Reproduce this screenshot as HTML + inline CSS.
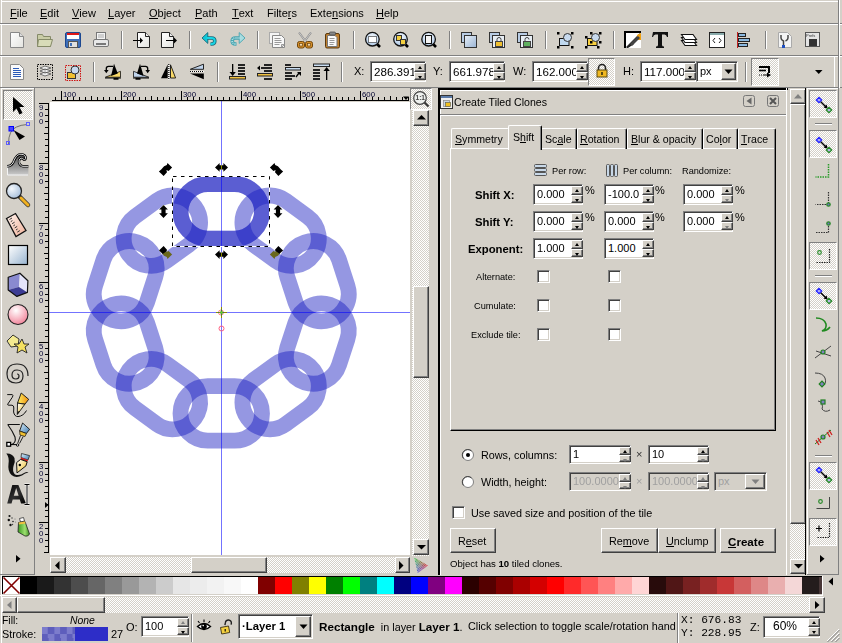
<!DOCTYPE html>
<html><head><meta charset="utf-8">
<style>
*{box-sizing:border-box}
body{margin:0;width:842px;height:643px;overflow:hidden;background:#d4d0c8;position:relative;font-family:"Liberation Sans",sans-serif;font-size:11px;color:#000}
.a{position:absolute}
.t{position:absolute;white-space:nowrap;line-height:13px}
.hl{position:absolute;height:1px}
.vl{position:absolute;width:1px}
.chk{background:repeating-conic-gradient(#fff 0 25%,#d4d0c8 0 50%) 0 0/2px 2px}
.chk2{background:repeating-conic-gradient(#c8c4bc 0 25%,#e8e6e2 0 50%) 0 0/2px 2px}
.sunk{position:absolute;border:1px solid;border-color:#808080 #fff #fff #808080}
.press{position:absolute;border:1px solid;border-color:#808080 #fff #fff #808080}
.inp{position:absolute;background:#fff;border:1px solid;border-color:#808080 #fff #fff #808080;box-shadow:inset 1px 1px 0 #404040, inset -1px -1px 0 #d4d0c8}
.inp span{position:absolute;left:3px;top:3px;white-space:nowrap;line-height:13px}
.btn{position:absolute;background:#d4d0c8;border:1px solid;border-color:#fff #404040 #404040 #fff;box-shadow:inset -1px -1px 0 #808080}
.spin{position:absolute;width:12px}
.spin i{position:absolute;left:0;width:12px;height:50%;background:#d4d0c8;border:1px solid;border-color:#fff #404040 #404040 #fff;box-shadow:inset -1px -1px 0 #808080}
.spin i.u{top:0}.spin i.d{bottom:0}
.spin i:after{content:"";position:absolute;left:3px;width:0;height:0;border-left:2.5px solid transparent;border-right:2.5px solid transparent}
.spin i.u:after{top:2px;border-bottom:3px solid #000}
.spin i.d:after{top:3px;border-top:3px solid #000}
.spin.dis i.u:after{border-bottom-color:#808080}.spin.dis i.d:after{border-top-color:#808080}.spin.dd i.d:after{border-top-color:#808080}.spin.du i.u:after{border-bottom-color:#808080}
.sep{position:absolute;width:2px;border-left:1px solid #808080;border-right:1px solid #fff}
.cb{position:absolute;width:13px;height:13px;background:#fff;border:1px solid;border-color:#808080 #fff #fff #808080;box-shadow:inset 1px 1px 0 #404040, inset -1px -1px 0 #d4d0c8}
u{text-decoration:none;border-bottom:1px solid currentColor;line-height:10px;display:inline-block}
svg{position:absolute;overflow:visible}
</style></head><body>


<!-- menu -->
<!-- window frame lines -->
<div class="vl" style="left:1px;top:0;height:643px;background:#fff"></div>
<div class="hl" style="left:1px;top:1px;width:837px;background:#fff"></div>

<!-- MENU -->
<div id="menu">
<div class="t" style="left:10px;top:7px"><u>F</u>ile</div>
<div class="t" style="left:40px;top:7px"><u>E</u>dit</div>
<div class="t" style="left:72px;top:7px"><u>V</u>iew</div>
<div class="t" style="left:108px;top:7px"><u>L</u>ayer</div>
<div class="t" style="left:149px;top:7px"><u>O</u>bject</div>
<div class="t" style="left:195px;top:7px"><u>P</u>ath</div>
<div class="t" style="left:232px;top:7px"><u>T</u>ext</div>
<div class="t" style="left:267px;top:7px">Filte<u>r</u>s</div>
<div class="t" style="left:310px;top:7px">Exte<u>n</u>sions</div>
<div class="t" style="left:376px;top:7px"><u>H</u>elp</div>
</div>
<div class="hl" style="left:0;top:23px;width:842px;background:#808080"></div>
<div class="hl" style="left:0;top:24px;width:842px;background:#fff"></div>
<div class="hl" style="left:0;top:55px;width:842px;background:#808080"></div>
<div class="hl" style="left:0;top:56px;width:842px;background:#fff"></div>
<div class="hl" style="left:0;top:87px;width:842px;background:#808080"></div>


<!-- tb1 -->
<svg style="left:0;top:0" width="842" height="56" viewBox="0 0 842 56">
<defs>
<linearGradient id="pg" x1="0" y1="0" x2="1" y2="1"><stop offset="0" stop-color="#fff"/><stop offset="1" stop-color="#e4e4e0"/></linearGradient>
<linearGradient id="bl" x1="0" y1="0" x2="1" y2="1"><stop offset="0" stop-color="#e8f0f8"/><stop offset="1" stop-color="#9ab4d4"/></linearGradient>
</defs>
<!-- new -->
<path d="M10.5 32.5h9l4 4v11h-13z" fill="url(#pg)" stroke="#888" />
<path d="M19.5 32.5v4h4" fill="#ddd" stroke="#888"/>
<!-- open -->
<path d="M37.5 34.5h5l1 2h7v10h-13z" fill="#c9cca6" stroke="#858a68"/>
<path d="M38.5 39.5h14l-2 7h-13z" fill="#d8dbb8" stroke="#858a68"/>
<!-- save -->
<rect x="65.5" y="32.5" width="15" height="15" rx="1.5" fill="#3f6fb8" stroke="#1d4890"/>
<rect x="67" y="33" width="12" height="6" fill="#fff"/>
<rect x="67" y="33" width="12" height="2" fill="#e01818"/>
<rect x="68.5" y="41.5" width="9" height="6" fill="#e0e0e0" stroke="#555"/>
<rect x="70" y="43" width="2" height="3" fill="#3f6fb8"/>
<!-- print -->
<rect x="96.5" y="32.5" width="9" height="7" fill="#f4f4f4" stroke="#777"/>
<path d="M98 35h6M98 37h6" stroke="#aaa"/>
<rect x="93.5" y="39.5" width="15" height="7" rx="1.5" fill="#e8e8e8" stroke="#777"/>
<path d="M96 44h10" stroke="#555" stroke-width="1.5"/>
<!-- sep -->
<rect x="121" y="31" width="1" height="18" fill="#808080"/><rect x="122" y="31" width="1" height="18" fill="#fff"/>
<!-- import -->
<path d="M137.5 32.5h8l4 4v11h-12z" fill="url(#pg)" stroke="#222"/>
<path d="M145.5 32.5v4h4" fill="#eee" stroke="#222"/>
<path d="M133 40.5h8" stroke="#000"/><path d="M140 37.5l3 3l-3 3z" fill="#000"/>
<!-- export -->
<path d="M161.5 32.5h8l4 4v11h-12z" fill="url(#pg)" stroke="#222"/>
<path d="M169.5 32.5v4h4" fill="#eee" stroke="#222"/>
<path d="M166 40.5h8" stroke="#000"/><path d="M174 37.5l3 3l-3 3z" fill="#000"/>
<!-- sep -->
<rect x="189" y="31" width="1" height="18" fill="#808080"/><rect x="190" y="31" width="1" height="18" fill="#fff"/>
<!-- undo -->
<path d="M206.5 38H211.5Q214.8 38 214.8 41Q214.8 44 211.5 44H210.5" fill="none" stroke="#1a6a78" stroke-width="3.6"/>
<path d="M202 38L207.8 32.6V43.4Z" fill="#10c8d8" stroke="#1a6a78" stroke-width=".9" stroke-linejoin="round"/>
<path d="M206.5 38H211.5Q214.8 38 214.8 41Q214.8 44 211.5 44H210.5" fill="none" stroke="#18d4e4" stroke-width="1.8"/>
<!-- redo -->
<path d="M240.5 38H235.5Q232.2 38 232.2 41Q232.2 44 235.5 44H236.5" fill="none" stroke="#48a4b0" stroke-width="3.6"/>
<path d="M245 38L239.2 32.6V43.4Z" fill="#a8dce0" stroke="#48a4b0" stroke-width=".9" stroke-linejoin="round"/>
<path d="M240.5 38H235.5Q232.2 38 232.2 41Q232.2 44 235.5 44H236.5" fill="none" stroke="#b0e0e4" stroke-width="1.8" stroke-dasharray="1 1"/>
<!-- sep -->
<rect x="257" y="31" width="1" height="18" fill="#808080"/><rect x="258" y="31" width="1" height="18" fill="#fff"/>
<!-- duplicate -->
<rect x="269.5" y="32.5" width="10" height="11" fill="#f4f4f4" stroke="#aaa"/>
<path d="M272.5 35.5h9l3 3v9h-12z" fill="#f8f8f8" stroke="#888"/>
<path d="M281.5 47.5l3-3h-3z" fill="#ddd" stroke="#888" stroke-width=".8"/>
<path d="M274.5 38.5h6M274.5 40.5h7M274.5 42.5h7M274.5 44.5h5" stroke="#999"/>
<!-- cut -->
<path d="M299 32.5l7 9.5M311 32.5l-7 9.5" stroke="#888" stroke-width="2"/>
<path d="M299 32.5l7 9.5M311 32.5l-7 9.5" stroke="#e4e4e4" stroke-width=".7"/>
<rect x="297.5" y="41.5" width="7" height="6.5" rx="2" fill="#d89028" stroke="#70460e"/>
<rect x="305.5" y="41.5" width="7" height="6.5" rx="2" fill="#d89028" stroke="#70460e"/>
<rect x="299.5" y="43.5" width="3" height="2.5" fill="#f0d8b0" stroke="#70460e" stroke-width=".7"/>
<rect x="307.5" y="43.5" width="3" height="2.5" fill="#f0d8b0" stroke="#70460e" stroke-width=".7"/>
<!-- paste -->
<rect x="325.5" y="33.5" width="14" height="14.5" rx="1.5" fill="#c08030" stroke="#5a3a10"/>
<path d="M327.5 35.5h7.5l2 2v9h-9.5z" fill="#fafafa" stroke="#777"/>
<rect x="329.5" y="32" width="6" height="3" rx="1" fill="#888" stroke="#444" stroke-width=".7"/>
<path d="M329.5 38.5h5M329.5 40.5h5M329.5 42.5h5M329.5 44.5h4" stroke="#999"/>
<!-- sep -->
<rect x="353" y="31" width="1" height="18" fill="#808080"/><rect x="354" y="31" width="1" height="18" fill="#fff"/>
<!-- zoom sel -->
<defs><radialGradient id="zl" cx=".5" cy=".35" r=".7"><stop offset="0" stop-color="#f8fbff"/><stop offset="1" stop-color="#a8c4e4"/></radialGradient></defs>
<path d="M377 44l3 3" stroke="#000" stroke-width="2.6"/>
<circle cx="372.4" cy="39.2" r="6.8" fill="url(#zl)" stroke="#111" stroke-width="1.3"/>
<rect x="368.5" y="36.5" width="8" height="6" fill="#fff" stroke="#000" stroke-dasharray="1 1"/>
<!-- zoom drawing -->
<path d="M405 44l3 3" stroke="#000" stroke-width="2.6"/>
<circle cx="400.5" cy="39.2" r="6.8" fill="url(#zl)" stroke="#111" stroke-width="1.3"/>
<rect x="396.5" y="35.5" width="5" height="5" fill="#f4d040" stroke="#333"/>
<rect x="400.5" y="39.5" width="5" height="5" fill="#f4d040" stroke="#333"/>
<!-- zoom page -->
<path d="M433 44l3 3" stroke="#000" stroke-width="2.6"/>
<circle cx="428.6" cy="39.2" r="6.8" fill="url(#zl)" stroke="#111" stroke-width="1.3"/>
<rect x="425.5" y="35.5" width="6" height="8" fill="#f4f4f4" stroke="#111"/>
<!-- sep -->
<rect x="449" y="31" width="1" height="18" fill="#808080"/><rect x="450" y="31" width="1" height="18" fill="#fff"/>
<!-- window icons -->
<rect x="461.5" y="32.5" width="10" height="10" fill="#b8cce4" stroke="#333"/>
<rect x="464.5" y="35.5" width="12" height="12" fill="url(#bl)" stroke="#333"/>
<rect x="489.5" y="32.5" width="10" height="10" fill="#b8cce4" stroke="#333"/>
<rect x="492.5" y="35.5" width="12" height="12" fill="#e8eef4" stroke="#333"/>
<rect x="495.5" y="41.5" width="7" height="5" fill="#f0c030" stroke="#444"/><path d="M497 41.5v-2a2 2 0 0 1 4 0v2" fill="none" stroke="#444"/>
<rect x="517.5" y="32.5" width="10" height="10" fill="#b8cce4" stroke="#333"/>
<rect x="520.5" y="35.5" width="12" height="12" fill="#e8eef4" stroke="#333"/>
<rect x="523.5" y="41.5" width="7" height="5" fill="#60b060" stroke="#444"/><path d="M525 41.5v-2a2 2 0 0 1 4 0" fill="none" stroke="#444"/>
<!-- sep -->
<rect x="545" y="31" width="1" height="18" fill="#808080"/><rect x="546" y="31" width="1" height="18" fill="#fff"/>
<!-- group-ish -->
<rect x="557" y="32" width="2.5" height="2.5" fill="#000"/><rect x="571" y="32" width="2.5" height="2.5" fill="#000"/><rect x="557" y="46" width="2.5" height="2.5" fill="#000"/><rect x="571" y="46" width="2.5" height="2.5" fill="#000"/>
<rect x="559.5" y="38.5" width="9.5" height="7" fill="#c0d8ee" stroke="#111"/>
<circle cx="567.5" cy="37.5" r="4" fill="#c8daee" stroke="#333"/>
<rect x="585" y="36" width="2.5" height="2.5" fill="#000"/><rect x="590" y="32" width="2.5" height="2.5" fill="#000"/><rect x="599" y="32" width="2.5" height="2.5" fill="#000"/><rect x="599" y="41" width="2.5" height="2.5" fill="#000"/><rect x="585" y="46" width="2.5" height="2.5" fill="#000"/><rect x="597" y="46" width="2.5" height="2.5" fill="#000"/>
<rect x="587.5" y="38.5" width="9.5" height="7" fill="#f8d040" stroke="#111"/>
<rect x="590" y="41" width="2.5" height="2.5" fill="#000"/>
<circle cx="595.5" cy="37.5" r="4" fill="#c8daee" stroke="#333"/>
<!-- sep -->
<rect x="613" y="31" width="1" height="18" fill="#808080"/><rect x="614" y="31" width="1" height="18" fill="#fff"/>
<!-- fill stroke -->
<rect x="625" y="32" width="16" height="16" fill="#fff"/>
<path d="M625 48V32H641" fill="none" stroke="#000" stroke-width="2"/>
<path d="M626 47L640 33V36L629 47Z" fill="#333"/>
<path d="M626 48L632 42L634 44L628 48Z" fill="#222"/>
<path d="M637 35L641 33L641 40L638 40Z" fill="#f0a010"/>
<path d="M630 44l8-8l2 2l-8 8z" fill="#444"/>
<!-- text T -->
<path d="M653 32h15v5h-1q-.5-2.5-2.5-2.5h-2.5v10.5q0 1.5 2 1.5v1.5h-8v-1.5q2 0 2-1.5v-10.5h-2.5q-2 0-2.5 2.5h-1z" fill="#111"/>
<!-- layers -->
<path d="M681.5 40.5h11.5l3.5 5h-11.5z" fill="#fff" stroke="#111" stroke-width="1.1"/>
<path d="M681.5 37.5h11.5l3.5 5h-11.5z" fill="#fff" stroke="#111" stroke-width="1.1"/>
<path d="M681.5 34.5h11.5l3.5 5h-11.5z" fill="#fff" stroke="#111" stroke-width="1.1"/>
<!-- xml -->
<rect x="709.5" y="32.5" width="15" height="15" fill="#fff" stroke="#222"/>
<rect x="710" y="33" width="14" height="2" fill="#8aa"/>
<path d="M715 38l-2 2.5l2 2.5M719 38l2 2.5l-2 2.5" fill="none" stroke="#222"/>
<!-- align -->
<rect x="737" y="32" width="1" height="16" fill="#c02020"/>
<rect x="738.5" y="33.5" width="7" height="3" fill="#8ab8e0" stroke="#222"/>
<rect x="738.5" y="38.5" width="11" height="3" fill="#8ab8e0" stroke="#222"/>
<rect x="738.5" y="43.5" width="9" height="3" fill="#8ab8e0" stroke="#222"/>
<!-- sep -->
<rect x="765" y="31" width="1" height="18" fill="#808080"/><rect x="766" y="31" width="1" height="18" fill="#fff"/>
<!-- doc props -->
<path d="M778.5 32.5h9l4 4v11h-13z" fill="#f4f4f4" stroke="#aaa"/>
<path d="M781 35v3q0 2 2.5 3v6M788 35v3q0 2-2.5 3" fill="none" stroke="#444" stroke-width="1.5"/>
<rect x="782" y="45" width="3" height="3" fill="#2050c0"/>
<!-- prefs -->
<rect x="805.5" y="32.5" width="14" height="14" fill="#e4e4e4" stroke="#555"/>
<rect x="809" y="39" width="8" height="7" fill="#333"/>
<text x="806" y="37" font-size="4" fill="#333" font-family="Liberation Sans">Prefs</text>
</svg>
<div class="vl" style="left:838px;top:0px;height:88px;background:#808080"></div><div class="vl" style="left:839px;top:0px;height:88px;background:#fff"></div>

<!-- tb2 -->
<svg style="left:0;top:56px" width="842" height="32" viewBox="0 56 842 32">
<!-- select all doc -->
<path d="M10.5 64.5h9l4 4v11h-13z" fill="#fafafa" stroke="#888"/>
<path d="M13 68.5h6M13 70.5h8M13 72.5h8M13 74.5h8M13 76.5h8" stroke="#2a5ab8" stroke-width="1"/>
<!-- select in all layers -->
<rect x="37.5" y="64.5" width="15" height="15" fill="none" stroke="#000" stroke-dasharray="1.5 1"/>
<path d="M40 74l5-2l6 2l-6 2z M40 71l5-2l6 2l-6 2z M40 68l5-2l6 2l-6 2z" fill="#f0f0f0" stroke="#555" stroke-width=".8"/>
<!-- select same -->
<rect x="65.5" y="65.5" width="15" height="15" fill="none" stroke="#d01010" stroke-dasharray="1.5 1"/>
<rect x="67.5" y="72.5" width="8" height="6" fill="#f0c030" stroke="#333"/>
<circle cx="75" cy="70" r="4" fill="#c8daf0" stroke="#333"/>
<!-- sep -->
<rect x="93" y="62" width="1" height="20" fill="#808080"/><rect x="94" y="62" width="1" height="20" fill="#fff"/>
<!-- rotate ccw -->
<path d="M105.4 77.2L120.5 71.3V77.2Z" fill="#f8d868" stroke="#111" stroke-width=".8"/>
<path d="M114 63.8L111 76L117.8 73.5Z" fill="#000"/>
<path d="M105 77.5L121 77.5V78.5H105Z M113.5 78H118.5V79.8H113.5Z" fill="#000"/>
<path d="M113 66.3H108.5Q106.3 66.3 106.3 68.5V70.5" fill="none" stroke="#000" stroke-width="1.3"/>
<path d="M104 70L106.3 73.3L108.6 70Z" fill="#000"/>
<!-- rotate cw -->
<path d="M133.5 71.3V77.2L148.8 77.2Z" fill="#c0d4ec" stroke="#111" stroke-width=".8"/>
<path d="M140 63.8L137 73.5L143.6 76Z" fill="#000"/>
<path d="M133 77.5L149 77.5V78.5H133Z M135.5 78H140.5V79.8H135.5Z" fill="#000"/>
<path d="M141 66.3H145.5Q147.7 66.3 147.7 68.5V70.5" fill="none" stroke="#000" stroke-width="1.3"/>
<path d="M145.4 70L147.7 73.3L150 70Z" fill="#000"/>
<!-- flip h -->
<path d="M161 78.3L167.7 64.5V78.3Z" fill="#000"/>
<path d="M170.5 64.8V78H175.6Z" fill="#f8d868" stroke="#111" stroke-width=".9"/>
<path d="M168.8 64V80" stroke="#fff" stroke-width="1.2"/>
<path d="M168.8 64V80" stroke="#000" stroke-width="1.2" stroke-dasharray="1 1"/>
<!-- flip v -->
<path d="M190.3 69.3L203.5 64.2V69.3Z" fill="#c0d4ec" stroke="#111" stroke-width=".9"/>
<path d="M190 73.5H203.8V79.3Z" fill="#000"/>
<path d="M190 71.5H204" stroke="#fff" stroke-width="1.2"/>
<path d="M190 71.5H204" stroke="#000" stroke-width="1.2" stroke-dasharray="1 1"/>
<!-- sep -->
<rect x="217" y="62" width="1" height="20" fill="#808080"/><rect x="218" y="62" width="1" height="20" fill="#fff"/>
<!-- lower to bottom -->
<rect x="232" y="64" width="1.3" height="10" fill="#000"/><path d="M229.5 72l3.15 4l3.15-4z" fill="#000"/>
<rect x="238" y="64" width="7" height="2" fill="#222"/><rect x="238" y="67" width="7" height="2" fill="#222"/><rect x="238" y="70" width="7" height="2" fill="#222"/><rect x="238" y="73" width="7" height="2" fill="#222"/>
<rect x="229.5" y="76.5" width="16" height="2.5" fill="#f0c040" stroke="#222" stroke-width="1"/>
<!-- lower -->
<rect x="264" y="64" width="8" height="2" fill="#222"/><rect x="261" y="67" width="11" height="2" fill="#222"/><rect x="264" y="70" width="8" height="2" fill="#222"/><rect x="264" y="78" width="8" height="2" fill="#222"/>
<path d="M257 68l3-2.5v5z" fill="#000"/>
<rect x="257.5" y="73.5" width="15" height="2.5" fill="#f0c040" stroke="#222" stroke-width="1"/>
<!-- raise -->
<rect x="285" y="64" width="6" height="2" fill="#222"/><rect x="285.5" y="67.5" width="15" height="2.5" fill="#c8dcf0" stroke="#222" stroke-width="1"/>
<rect x="285" y="72" width="7" height="2" fill="#222"/><rect x="285" y="75" width="10" height="2" fill="#222"/><rect x="285" y="78" width="7" height="2" fill="#222"/>
<path d="M296 77l3-4" stroke="#000" stroke-width="1.3"/><path d="M297 72h4v4z" fill="#000"/>
<!-- raise to top -->
<rect x="313.5" y="64" width="16" height="2.5" fill="#c8dcf0" stroke="#222" stroke-width="1"/>
<rect x="313" y="69" width="7" height="2" fill="#222"/><rect x="313" y="72" width="7" height="2" fill="#222"/><rect x="313" y="75" width="7" height="2" fill="#222"/><rect x="313" y="78" width="7" height="2" fill="#222"/>
<rect x="326" y="70" width="1.3" height="10" fill="#000"/><path d="M323.5 71l3.15-4l3.15 4z" fill="#000"/>
<!-- sep -->
<rect x="341" y="62" width="1" height="20" fill="#808080"/><rect x="342" y="62" width="1" height="20" fill="#fff"/>
<!-- sep 745 -->
<rect x="745" y="62" width="1" height="20" fill="#808080"/><rect x="746" y="62" width="1" height="20" fill="#fff"/>
<!-- dropdown arrow -->
<path d="M815 70h7.5l-3.75 4z" fill="#000"/>
</svg>
<div class="t" style="left:354px;top:65px">X:</div>
<div class="inp" style="left:370px;top:61px;width:56px;height:21px;overflow:hidden"><span style="font-size:11.6px;top:3px">286.391</span></div>
<div class="spin" style="left:414px;top:63px;height:17px"><i class="u"></i><i class="d"></i></div>
<div class="t" style="left:433px;top:65px">Y:</div>
<div class="inp" style="left:449px;top:61px;width:56px;height:21px;overflow:hidden"><span style="font-size:11.6px;top:3px">661.978</span></div>
<div class="spin" style="left:493px;top:63px;height:17px"><i class="u"></i><i class="d"></i></div>
<div class="t" style="left:513px;top:65px">W:</div>
<div class="inp" style="left:532px;top:61px;width:56px;height:21px;overflow:hidden"><span style="font-size:11.6px;top:3px">162.000</span></div>
<div class="spin" style="left:576px;top:63px;height:17px"><i class="u"></i><i class="d"></i></div>
<div class="press chk" style="left:588px;top:58px;width:27px;height:28px"></div>
<svg style="left:596px;top:63px" width="12" height="16" viewBox="0 0 12 16">
<path d="M2.5 7.5v-2.5a3.5 3.5 0 0 1 7 0v2.5" fill="none" stroke="#222" stroke-width="1.6"/>
<rect x="1" y="7" width="10" height="7" fill="#f0b820" stroke="#5a4a10"/>
<rect x="5" y="9" width="2" height="3" fill="#5a4a10"/>
</svg>
<div class="t" style="left:623px;top:65px">H:</div>
<div class="inp" style="left:640px;top:61px;width:56px;height:21px;overflow:hidden"><span style="font-size:11.6px;top:3px">117.000</span></div>
<div class="spin" style="left:684px;top:63px;height:17px"><i class="u"></i><i class="d"></i></div>
<div class="inp" style="left:696px;top:61px;width:42px;height:21px"><span style="top:3px;left:3px">px</span></div>
<div class="btn" style="left:721px;top:63px;width:15px;height:17px"></div>
<svg style="left:724px;top:69px" width="9" height="6"><path d="M0.5 0.5h8l-4 4.5z" fill="#000"/></svg>
<div class="press chk" style="left:751px;top:58px;width:28px;height:28px"></div>
<svg style="left:756px;top:64px" width="18" height="16" viewBox="0 0 18 16">
<path d="M3 3h10v6" fill="none" stroke="#000" stroke-width="2"/>
<path d="M3 6.5h7" stroke="#000" stroke-width="1.6"/>
<path d="M3 11h1M5 11h1M7 11h5" stroke="#000" stroke-width="1"/>
<path d="M11 8.5l4 2.5l-4 2.5z" fill="#000"/>
</svg>
<div class="vl" style="left:834px;top:57px;height:30px;background:#fff"></div>

<!-- toolbox -->
<div class="hl" style="left:1px;top:88px;width:33px;background:#fff"></div>
<div class="vl" style="left:34px;top:88px;height:487px;background:#808080"></div>
<div class="hl" style="left:0;top:574px;width:35px;background:#808080"></div>
<div class="press chk" style="left:3px;top:90px;width:30px;height:30px"></div>
<svg style="left:0;top:88px" width="35" height="487" viewBox="0 88 35 487">
<defs>
<linearGradient id="tw" x1="0" y1="0" x2="0" y2="1"><stop offset="0" stop-color="#505050"/><stop offset=".5" stop-color="#8a8a8a"/><stop offset="1" stop-color="#cfcfcf"/></linearGradient>
<radialGradient id="lens" cx=".35" cy=".35" r=".7"><stop offset="0" stop-color="#f4f8fc"/><stop offset="1" stop-color="#a8c0dc"/></radialGradient>
<linearGradient id="rg" x1="0" y1="0" x2="1" y2="1"><stop offset="0" stop-color="#fff"/><stop offset="1" stop-color="#98b4d0"/></linearGradient>
<radialGradient id="eg" cx=".4" cy=".3" r=".8"><stop offset="0" stop-color="#fff"/><stop offset="1" stop-color="#f07890"/></radialGradient>
<linearGradient id="bx" x1="0" y1="0" x2="1" y2="1"><stop offset="0" stop-color="#c8c8f0"/><stop offset="1" stop-color="#5858a8"/></linearGradient>
<linearGradient id="ruler" x1="0" y1="0" x2="1" y2="1"><stop offset="0" stop-color="#fff4ee"/><stop offset="1" stop-color="#f0b098"/></linearGradient>
<linearGradient id="spr" x1="0" y1="0" x2="1" y2="0"><stop offset="0" stop-color="#3a9a20"/><stop offset=".6" stop-color="#9ee070"/><stop offset="1" stop-color="#3a8a20"/></linearGradient>
<linearGradient id="pen1" x1="0" y1="0" x2="1" y2="0"><stop offset="0" stop-color="#fff060"/><stop offset="1" stop-color="#f09010"/></linearGradient>
<linearGradient id="pen2" x1="0" y1="0" x2="1" y2="1"><stop offset="0" stop-color="#fff"/><stop offset="1" stop-color="#f0c020"/></linearGradient>
<linearGradient id="penb" x1="0" y1="0" x2="1" y2="1"><stop offset="0" stop-color="#e0f4fc"/><stop offset="1" stop-color="#3c78b0"/></linearGradient>
<linearGradient id="txa" x1="0" y1="0" x2="1" y2="1"><stop offset="0" stop-color="#000"/><stop offset=".5" stop-color="#303030"/><stop offset="1" stop-color="#000"/></linearGradient>
</defs>
<!-- select arrow -->
<path d="M13 97v15l3.5-3.5l3 6l3-1.5l-3-6h5z" fill="#000"/>
<!-- node -->
<path d="M8.5 144q0-14 8-17q4-2 10.5-2.5" fill="none" stroke="#555" stroke-width=".8"/>
<rect x="9" y="126.5" width="4.5" height="4.5" fill="#4848ff" stroke="#0000ff"/>
<rect x="6.5" y="141.5" width="3" height="3" fill="none" stroke="#6060ff"/>
<rect x="26.5" y="122.5" width="3" height="3" fill="none" stroke="#6060ff"/>
<path d="M13.5 130l6 10l5.5-3.5z" fill="#000"/>
<!-- tweak -->
<path d="M7 166.3C10 166.3 12 165 13.5 162C15 158 17 154.2 21 154.2C24.5 154.2 26 156.5 25.6 158.5C25.3 160 24 160 23.3 159C22.5 158 21 157.8 20 158.8C18.5 160.5 18.8 163.5 20.5 165.2C21.3 166 22 166.3 23 166.3L28.4 166.3L28.4 175.5L7 175.5Z" fill="url(#tw)"/>
<path d="M7.5 166.5V175H28" fill="none" stroke="#f4f4f4" stroke-width="1"/>
<path d="M7 166.3C10 166.3 12 165 13.5 162C15 158 17 154.2 21 154.2C24.5 154.2 26 156.5 25.6 158.5C25.3 160 24 160 23.3 159C22.5 158 21 157.8 20 158.8C18.5 160.5 18.8 163.5 20.5 165.2C21.3 166 22 166.3 23 166.3L28.4 166.3" fill="none" stroke="#000" stroke-width="2.6"/>
<path d="M7 166.3C10 166.3 12 165 13.5 162C15 158 17 154.2 21 154.2C24.5 154.2 26 156.5 25.6 158.5C25.3 160 24 160 23.3 159C22.5 158 21 157.8 20 158.8C18.5 160.5 18.8 163.5 20.5 165.2C21.3 166 22 166.3 23 166.3L28.4 166.3" fill="none" stroke="#fff" stroke-width=".9"/>
<!-- zoom -->
<path d="M19 196l9 9" stroke="#333" stroke-width="4.5" stroke-linecap="round"/>
<path d="M21 198l7 7" stroke="#f0b020" stroke-width="3" stroke-linecap="round"/>
<circle cx="14" cy="191" r="7.5" fill="url(#lens)" stroke="#222" stroke-width="1.3"/>
<!-- measure -->
<path d="M6.5 218.5L15.5 213.5L26 230.5L16 236.5Z" fill="url(#ruler)" stroke="#111" stroke-width="1.3"/>
<path d="M9.5 219.5l2.5-1.5M10.8 221.6l1.6-1M12.1 223.7l2.5-1.5M13.4 225.8l1.6-1M14.7 227.9l2.5-1.5M16 230l1.6-1M17.3 232.1l2.5-1.5" stroke="#222" stroke-width=".9"/>
<!-- rect -->
<rect x="8.5" y="245.5" width="19" height="19" fill="url(#rg)" stroke="#000" stroke-width="1.2"/>
<!-- 3d box -->
<path d="M8.2 277.2L19.9 273.2L18.9 286.9L8.2 290.1Z" fill="#8a8ad0"/>
<path d="M19.9 273.2L27.9 280.7L27.4 292.4L18.9 286.9Z" fill="#e4e4fa"/>
<path d="M8.2 290.1L18.9 286.9L27.4 292.4L16.9 296.4Z" fill="#3c3c94"/>
<path d="M8.2 277.2L19.9 273.2L27.9 280.7L27.4 292.4L16.9 296.4L8.2 290.1Z" fill="none" stroke="#111" stroke-width="1.2" stroke-linejoin="round"/>
<!-- ellipse -->
<circle cx="18" cy="314.5" r="10" fill="url(#eg)" stroke="#222" stroke-width="1.1"/>
<!-- star -->
<path d="M13 335l6 4l-1 7l-7 1l-4-6z" fill="#f4ea90" stroke="#222" stroke-width=".9"/>
<path d="M22 339l2 5h5l-4 3l2 6l-5-3l-5 3l1-6l-4-3h5z" fill="#f4e060" stroke="#222" stroke-width=".9"/>
<!-- spiral -->
<path d="M17 374q2 0 2 2q0 3-3 3q-4 0-4-4q0-5 5-5q6 0 6 6q0 7-7 7q-9 0-9-9q0-10 10-10q11 0 11 12" fill="none" stroke="#222" stroke-width="1.2"/>
<!-- pencil -->
<path d="M7.2 394.6H12.3Q13.6 395.3 12.3 397.3L7.6 404.3Q7.4 405.2 9 405.2H12Q14 405.4 13.8 408L13.6 412Q14.4 416.6 18 416.6Q23.5 416 26.5 410.5" fill="none" stroke="#111" stroke-width="1"/>
<path d="M21.2 393L28.7 399.3L24.9 404.2L17.5 403.1Z" fill="url(#pen1)" stroke="#111" stroke-width=".9"/>
<path d="M17.5 403.1L24.9 404.2L17.3 414.5Z" fill="url(#pen2)" stroke="#111" stroke-width=".9"/>
<path d="M17.6 411.5L19.6 411.2L17.3 414.5Z" fill="#000"/>
<!-- pen -->
<path d="M7.7 424.5H19.8M7.7 424.5Q12.5 431 15 437Q16.5 443 11 444.8" fill="none" stroke="#111" stroke-width="1.1"/>
<rect x="6.8" y="442.4" width="3.8" height="3.8" fill="#fff" stroke="#000" stroke-width="1.3"/>
<path d="M10.6 444.6H16.4" stroke="#000" stroke-width="1"/>
<circle cx="17.6" cy="445" r="1.2" fill="#fff" stroke="#000" stroke-width="1"/>
<path d="M22.6 423L29.6 429.3L26.4 433.5L19.6 431Z" fill="url(#penb)" stroke="#111" stroke-width=".9"/>
<path d="M19.6 431L26.4 433.5L25 436.5L20 435Z" fill="#f0c030" stroke="#111" stroke-width=".7"/>
<path d="M20.5 435.5L17.8 443M23.2 436.5L19.5 443.5" stroke="#111" stroke-width=".9"/>
<!-- calligraphy -->
<path d="M6.3 453.5Q12 453 14.5 458Q15.5 462 13.5 466Q12 471 15 474.5Q20 476 24 473Q27 471.5 28.5 472.5Q25 473 22 475.5Q16 478.5 11.5 475Q7.5 471 8.5 464Q9.5 457 6.3 453.5Z" fill="#111"/>
<path d="M21.5 453.5L29.6 455.6L28 460L21 457.5Z" fill="url(#penb)" stroke="#111" stroke-width=".7"/>
<path d="M21 457.5L28 460L27.2 461.8L20.6 459.4Z" fill="#d01818"/>
<path d="M16.6 462.6L20.6 459.4L27.2 461.8L25.9 465.9L17 472.9Z" fill="url(#pen2)" stroke="#111" stroke-width="1"/>
<circle cx="19.8" cy="465" r="1.2" fill="#000"/>
<!-- text -->
<path d="M7.2 503.5L12.3 485H18.4L26 503.5H21L19.8 499.5H12.7L11.5 503.5Z M13.8 495.8H18.6L16.2 488Z" fill="url(#txa)"/>
<path d="M24.5 484.5h5M27 484.5v20M24.5 504.5h5" stroke="#fff" stroke-width="2.2"/>
<path d="M24.5 484.5h5M27 484.5v20M24.5 504.5h5" stroke="#000" stroke-width="1"/>
<!-- spray -->
<circle cx="9.5" cy="516" r="1.1" fill="#111"/><circle cx="8.8" cy="520" r="1.2" fill="#111"/><circle cx="10.5" cy="525" r="1.2" fill="#111"/><circle cx="12" cy="518" r=".7" fill="#333"/><circle cx="13" cy="521.5" r=".8" fill="#222"/><circle cx="15" cy="519" r=".6" fill="#777"/><circle cx="15.5" cy="522" r=".6" fill="#888"/><circle cx="12.5" cy="524.5" r=".7" fill="#444"/>
<path d="M19.5 518.5L23.5 517.5L24.5 521L20.5 522Z" fill="#fff" stroke="#333" stroke-width=".8"/>
<path d="M18.5 522.5L25 521.5L29.5 534Q28 537 25 536L18 532Z" fill="url(#spr)" stroke="#222" stroke-width=".8"/>
<path d="M18.6 522.5L25 521.5L25.5 523.5L19 524.5Z" fill="#f0c040"/>
<!-- more arrow -->
<path d="M16 555v7.5l4.5-3.75z" fill="#000"/>
</svg>

<!-- canvas -->
<div class="a" style="left:50px;top:102px;width:360px;height:453px;background:#fff"></div>
<svg style="left:35px;top:88px" width="375" height="13" viewBox="35 88 375 13">
<rect x="52" y="100" width="357" height="1" fill="#000"/>
<rect x="55" y="97" width="1" height="3" fill="#000"/>
<rect x="61" y="91" width="1" height="9" fill="#000"/>
<text x="63" y="96.6" font-size="7.8" fill="#000030" font-family="Liberation Sans">100</text>
<rect x="67" y="97" width="1" height="3" fill="#000"/>
<rect x="73" y="97" width="1" height="3" fill="#000"/>
<rect x="79" y="97" width="1" height="3" fill="#000"/>
<rect x="85" y="97" width="1" height="3" fill="#000"/>
<rect x="91" y="96" width="1" height="4" fill="#000"/>
<rect x="97" y="97" width="1" height="3" fill="#000"/>
<rect x="103" y="97" width="1" height="3" fill="#000"/>
<rect x="109" y="97" width="1" height="3" fill="#000"/>
<rect x="115" y="97" width="1" height="3" fill="#000"/>
<rect x="121" y="91" width="1" height="9" fill="#000"/>
<text x="123" y="96.6" font-size="7.8" fill="#000030" font-family="Liberation Sans">200</text>
<rect x="127" y="97" width="1" height="3" fill="#000"/>
<rect x="133" y="97" width="1" height="3" fill="#000"/>
<rect x="139" y="97" width="1" height="3" fill="#000"/>
<rect x="145" y="97" width="1" height="3" fill="#000"/>
<rect x="151" y="96" width="1" height="4" fill="#000"/>
<rect x="157" y="97" width="1" height="3" fill="#000"/>
<rect x="163" y="97" width="1" height="3" fill="#000"/>
<rect x="169" y="97" width="1" height="3" fill="#000"/>
<rect x="175" y="97" width="1" height="3" fill="#000"/>
<rect x="181" y="91" width="1" height="9" fill="#000"/>
<text x="183" y="96.6" font-size="7.8" fill="#000030" font-family="Liberation Sans">300</text>
<rect x="187" y="97" width="1" height="3" fill="#000"/>
<rect x="193" y="97" width="1" height="3" fill="#000"/>
<rect x="199" y="97" width="1" height="3" fill="#000"/>
<rect x="205" y="97" width="1" height="3" fill="#000"/>
<rect x="211" y="96" width="1" height="4" fill="#000"/>
<rect x="217" y="97" width="1" height="3" fill="#000"/>
<rect x="223" y="97" width="1" height="3" fill="#000"/>
<rect x="229" y="97" width="1" height="3" fill="#000"/>
<rect x="235" y="97" width="1" height="3" fill="#000"/>
<rect x="241" y="91" width="1" height="9" fill="#000"/>
<text x="243" y="96.6" font-size="7.8" fill="#000030" font-family="Liberation Sans">400</text>
<rect x="247" y="97" width="1" height="3" fill="#000"/>
<rect x="253" y="97" width="1" height="3" fill="#000"/>
<rect x="259" y="97" width="1" height="3" fill="#000"/>
<rect x="265" y="97" width="1" height="3" fill="#000"/>
<rect x="271" y="96" width="1" height="4" fill="#000"/>
<rect x="276" y="97" width="1" height="3" fill="#000"/>
<rect x="282" y="97" width="1" height="3" fill="#000"/>
<rect x="288" y="97" width="1" height="3" fill="#000"/>
<rect x="294" y="97" width="1" height="3" fill="#000"/>
<rect x="300" y="91" width="1" height="9" fill="#000"/>
<text x="302" y="96.6" font-size="7.8" fill="#000030" font-family="Liberation Sans">500</text>
<rect x="306" y="97" width="1" height="3" fill="#000"/>
<rect x="312" y="97" width="1" height="3" fill="#000"/>
<rect x="318" y="97" width="1" height="3" fill="#000"/>
<rect x="324" y="97" width="1" height="3" fill="#000"/>
<rect x="330" y="96" width="1" height="4" fill="#000"/>
<rect x="336" y="97" width="1" height="3" fill="#000"/>
<rect x="342" y="97" width="1" height="3" fill="#000"/>
<rect x="348" y="97" width="1" height="3" fill="#000"/>
<rect x="354" y="97" width="1" height="3" fill="#000"/>
<rect x="360" y="91" width="1" height="9" fill="#000"/>
<text x="362" y="96.6" font-size="7.8" fill="#000030" font-family="Liberation Sans">600</text>
<rect x="366" y="97" width="1" height="3" fill="#000"/>
<rect x="372" y="97" width="1" height="3" fill="#000"/>
<rect x="378" y="97" width="1" height="3" fill="#000"/>
<rect x="384" y="97" width="1" height="3" fill="#000"/>
<rect x="390" y="96" width="1" height="4" fill="#000"/>
<rect x="396" y="97" width="1" height="3" fill="#000"/>
<rect x="402" y="97" width="1" height="3" fill="#000"/>
<rect x="408" y="97" width="1" height="3" fill="#000"/>
<path d="M403 96.5h6l-3 3.5z" fill="#000"/>
</svg>
<svg style="left:35px;top:101px" width="14" height="454" viewBox="35 101 14 454">
<rect x="48" y="103" width="1" height="450" fill="#000"/>
<rect x="39" y="103" width="9" height="1" fill="#000"/>
<text x="39" y="110.4" font-size="7.8" fill="#000030" font-family="Liberation Sans">9</text>
<text x="39" y="117.10000000000001" font-size="7.8" fill="#000030" font-family="Liberation Sans">0</text>
<text x="39" y="123.80000000000001" font-size="7.8" fill="#000030" font-family="Liberation Sans">0</text>
<rect x="45" y="109" width="3" height="1" fill="#000"/>
<rect x="45" y="115" width="3" height="1" fill="#000"/>
<rect x="45" y="121" width="3" height="1" fill="#000"/>
<rect x="45" y="127" width="3" height="1" fill="#000"/>
<rect x="44" y="133" width="4" height="1" fill="#000"/>
<rect x="45" y="139" width="3" height="1" fill="#000"/>
<rect x="45" y="145" width="3" height="1" fill="#000"/>
<rect x="45" y="151" width="3" height="1" fill="#000"/>
<rect x="45" y="157" width="3" height="1" fill="#000"/>
<rect x="39" y="163" width="9" height="1" fill="#000"/>
<text x="39" y="170.4" font-size="7.8" fill="#000030" font-family="Liberation Sans">8</text>
<text x="39" y="177.1" font-size="7.8" fill="#000030" font-family="Liberation Sans">0</text>
<text x="39" y="183.8" font-size="7.8" fill="#000030" font-family="Liberation Sans">0</text>
<rect x="45" y="169" width="3" height="1" fill="#000"/>
<rect x="45" y="175" width="3" height="1" fill="#000"/>
<rect x="45" y="181" width="3" height="1" fill="#000"/>
<rect x="45" y="187" width="3" height="1" fill="#000"/>
<rect x="44" y="193" width="4" height="1" fill="#000"/>
<rect x="45" y="199" width="3" height="1" fill="#000"/>
<rect x="45" y="205" width="3" height="1" fill="#000"/>
<rect x="45" y="211" width="3" height="1" fill="#000"/>
<rect x="45" y="217" width="3" height="1" fill="#000"/>
<rect x="39" y="223" width="9" height="1" fill="#000"/>
<text x="39" y="230.4" font-size="7.8" fill="#000030" font-family="Liberation Sans">7</text>
<text x="39" y="237.1" font-size="7.8" fill="#000030" font-family="Liberation Sans">0</text>
<text x="39" y="243.8" font-size="7.8" fill="#000030" font-family="Liberation Sans">0</text>
<rect x="45" y="229" width="3" height="1" fill="#000"/>
<rect x="45" y="235" width="3" height="1" fill="#000"/>
<rect x="45" y="241" width="3" height="1" fill="#000"/>
<rect x="45" y="247" width="3" height="1" fill="#000"/>
<rect x="44" y="253" width="4" height="1" fill="#000"/>
<rect x="45" y="258" width="3" height="1" fill="#000"/>
<rect x="45" y="264" width="3" height="1" fill="#000"/>
<rect x="45" y="270" width="3" height="1" fill="#000"/>
<rect x="45" y="276" width="3" height="1" fill="#000"/>
<rect x="39" y="282" width="9" height="1" fill="#000"/>
<text x="39" y="289.4" font-size="7.8" fill="#000030" font-family="Liberation Sans">6</text>
<text x="39" y="296.09999999999997" font-size="7.8" fill="#000030" font-family="Liberation Sans">0</text>
<text x="39" y="302.79999999999995" font-size="7.8" fill="#000030" font-family="Liberation Sans">0</text>
<rect x="45" y="288" width="3" height="1" fill="#000"/>
<rect x="45" y="294" width="3" height="1" fill="#000"/>
<rect x="45" y="300" width="3" height="1" fill="#000"/>
<rect x="45" y="306" width="3" height="1" fill="#000"/>
<rect x="44" y="312" width="4" height="1" fill="#000"/>
<rect x="45" y="318" width="3" height="1" fill="#000"/>
<rect x="45" y="324" width="3" height="1" fill="#000"/>
<rect x="45" y="330" width="3" height="1" fill="#000"/>
<rect x="45" y="336" width="3" height="1" fill="#000"/>
<rect x="39" y="342" width="9" height="1" fill="#000"/>
<text x="39" y="349.4" font-size="7.8" fill="#000030" font-family="Liberation Sans">5</text>
<text x="39" y="356.09999999999997" font-size="7.8" fill="#000030" font-family="Liberation Sans">0</text>
<text x="39" y="362.79999999999995" font-size="7.8" fill="#000030" font-family="Liberation Sans">0</text>
<rect x="45" y="348" width="3" height="1" fill="#000"/>
<rect x="45" y="354" width="3" height="1" fill="#000"/>
<rect x="45" y="360" width="3" height="1" fill="#000"/>
<rect x="45" y="366" width="3" height="1" fill="#000"/>
<rect x="44" y="372" width="4" height="1" fill="#000"/>
<rect x="45" y="378" width="3" height="1" fill="#000"/>
<rect x="45" y="384" width="3" height="1" fill="#000"/>
<rect x="45" y="390" width="3" height="1" fill="#000"/>
<rect x="45" y="396" width="3" height="1" fill="#000"/>
<rect x="39" y="402" width="9" height="1" fill="#000"/>
<text x="39" y="409.4" font-size="7.8" fill="#000030" font-family="Liberation Sans">4</text>
<text x="39" y="416.09999999999997" font-size="7.8" fill="#000030" font-family="Liberation Sans">0</text>
<text x="39" y="422.79999999999995" font-size="7.8" fill="#000030" font-family="Liberation Sans">0</text>
<rect x="45" y="408" width="3" height="1" fill="#000"/>
<rect x="45" y="414" width="3" height="1" fill="#000"/>
<rect x="45" y="420" width="3" height="1" fill="#000"/>
<rect x="45" y="426" width="3" height="1" fill="#000"/>
<rect x="44" y="432" width="4" height="1" fill="#000"/>
<rect x="45" y="438" width="3" height="1" fill="#000"/>
<rect x="45" y="444" width="3" height="1" fill="#000"/>
<rect x="45" y="450" width="3" height="1" fill="#000"/>
<rect x="45" y="456" width="3" height="1" fill="#000"/>
<rect x="39" y="462" width="9" height="1" fill="#000"/>
<text x="39" y="469.4" font-size="7.8" fill="#000030" font-family="Liberation Sans">3</text>
<text x="39" y="476.09999999999997" font-size="7.8" fill="#000030" font-family="Liberation Sans">0</text>
<text x="39" y="482.79999999999995" font-size="7.8" fill="#000030" font-family="Liberation Sans">0</text>
<rect x="45" y="468" width="3" height="1" fill="#000"/>
<rect x="45" y="474" width="3" height="1" fill="#000"/>
<rect x="45" y="480" width="3" height="1" fill="#000"/>
<rect x="45" y="486" width="3" height="1" fill="#000"/>
<rect x="44" y="492" width="4" height="1" fill="#000"/>
<rect x="45" y="498" width="3" height="1" fill="#000"/>
<rect x="45" y="504" width="3" height="1" fill="#000"/>
<rect x="45" y="510" width="3" height="1" fill="#000"/>
<rect x="45" y="516" width="3" height="1" fill="#000"/>
<rect x="39" y="522" width="9" height="1" fill="#000"/>
<text x="39" y="529.4" font-size="7.8" fill="#000030" font-family="Liberation Sans">2</text>
<text x="39" y="536.1" font-size="7.8" fill="#000030" font-family="Liberation Sans">0</text>
<text x="39" y="542.8" font-size="7.8" fill="#000030" font-family="Liberation Sans">0</text>
<rect x="45" y="528" width="3" height="1" fill="#000"/>
<rect x="45" y="534" width="3" height="1" fill="#000"/>
<rect x="45" y="540" width="3" height="1" fill="#000"/>
<rect x="45" y="546" width="3" height="1" fill="#000"/>
<rect x="44" y="552" width="4" height="1" fill="#000"/>
<path d="M45 502v6l3.5-3z" fill="#000"/>
</svg>
<svg style="left:49px;top:101px" width="361" height="454" viewBox="49 101 361 454"><g fill="none" stroke="rgb(24,28,192)" stroke-opacity=".46" stroke-width="15.8"><rect x="180.5" y="184.14999999999998" width="81.5" height="54.5" rx="27.25" transform="rotate(0 221.25 312.4)"/><rect x="180.5" y="184.14999999999998" width="81.5" height="54.5" rx="27.25" transform="rotate(0 221.25 312.4)"/><rect x="180.5" y="184.14999999999998" width="81.5" height="54.5" rx="27.25" transform="rotate(36 221.25 312.4)"/><rect x="180.5" y="184.14999999999998" width="81.5" height="54.5" rx="27.25" transform="rotate(72 221.25 312.4)"/><rect x="180.5" y="184.14999999999998" width="81.5" height="54.5" rx="27.25" transform="rotate(108 221.25 312.4)"/><rect x="180.5" y="184.14999999999998" width="81.5" height="54.5" rx="27.25" transform="rotate(144 221.25 312.4)"/><rect x="180.5" y="184.14999999999998" width="81.5" height="54.5" rx="27.25" transform="rotate(180 221.25 312.4)"/><rect x="180.5" y="184.14999999999998" width="81.5" height="54.5" rx="27.25" transform="rotate(216 221.25 312.4)"/><rect x="180.5" y="184.14999999999998" width="81.5" height="54.5" rx="27.25" transform="rotate(252 221.25 312.4)"/><rect x="180.5" y="184.14999999999998" width="81.5" height="54.5" rx="27.25" transform="rotate(288 221.25 312.4)"/><rect x="180.5" y="184.14999999999998" width="81.5" height="54.5" rx="27.25" transform="rotate(324 221.25 312.4)"/></g><rect x="221" y="101" width="1" height="454" fill="rgba(0,0,255,.55)"/><rect x="49" y="312" width="361" height="1" fill="rgba(0,0,255,.55)"/><rect x="172.5" y="176.5" width="97" height="70" fill="none" stroke="#fff" stroke-width="1"/><rect x="172.5" y="176.5" width="97" height="70" fill="none" stroke="#000" stroke-width="1" stroke-dasharray="3.5 4.5" stroke-dashoffset="-0.5"/><circle cx="221" cy="312.5" r="2.5" fill="none" stroke="#ff8080" stroke-width="1"/><g style="mix-blend-mode:difference"><path d="M216 312.5h11M221.5 307v11" stroke="#fff" stroke-width="1"/></g><rect x="220" y="311" width="3" height="3" fill="#40c040" opacity=".6"/><circle cx="221.5" cy="328.5" r="2.5" fill="none" stroke="#ff6080" stroke-width="1"/><g fill="#fff" style="mix-blend-mode:difference"><path transform="translate(165.5 169.5)" d="M2 -6.5L6.6 -2L3.1 1.4L0.9 0.6L1.5 2.8L-1.9 6.4L-6.6 1.9L-4.3 -0.1L-1.4 -3.3L1.3 -4.4Z"/><path transform="translate(276.5 169.5) scale(-1 1)" d="M2 -6.5L6.6 -2L3.1 1.4L0.9 0.6L1.5 2.8L-1.9 6.4L-6.6 1.9L-4.3 -0.1L-1.4 -3.3L1.3 -4.4Z"/><path transform="translate(165.5 252.5) scale(1 -1)" d="M2 -6.5L6.6 -2L3.1 1.4L0.9 0.6L1.5 2.8L-1.9 6.4L-6.6 1.9L-4.3 -0.1L-1.4 -3.3L1.3 -4.4Z"/><path transform="translate(276.5 252.5) scale(-1 -1)" d="M2 -6.5L6.6 -2L3.1 1.4L0.9 0.6L1.5 2.8L-1.9 6.4L-6.6 1.9L-4.3 -0.1L-1.4 -3.3L1.3 -4.4Z"/><path transform="translate(221.5 167.4)" d="M-6.5 0L-1.9 -4.4V-2.1H1.9V-4.4L6.5 0L1.9 4.4V2.1H-1.9V4.4Z"/><path transform="translate(221.5 254.6)" d="M-6.5 0L-1.9 -4.4V-2.1H1.9V-4.4L6.5 0L1.9 4.4V2.1H-1.9V4.4Z"/><path transform="translate(163.5 211.4) rotate(90)" d="M-6.5 0L-1.9 -4.4V-2.1H1.9V-4.4L6.5 0L1.9 4.4V2.1H-1.9V4.4Z"/><path transform="translate(278 211.4) rotate(90)" d="M-6.5 0L-1.9 -4.4V-2.1H1.9V-4.4L6.5 0L1.9 4.4V2.1H-1.9V4.4Z"/></g></svg>
<div class="press chk" style="left:410px;top:88px;width:22px;height:22px"></div>
<svg style="left:412px;top:90px" width="19" height="19" viewBox="0 0 19 19"><path d="M11.5 11.5l5 5" stroke="#333" stroke-width="2"/><circle cx="8" cy="8" r="6.3" fill="#eef0ee" stroke="#444" stroke-width="1.2"/><text x="3.6" y="10.4" font-size="6.5" font-weight="bold" fill="#444" font-family="Liberation Sans">1:1</text></svg>
<div class="a chk" style="left:412px;top:110px;width:17px;height:446px"></div>
<div class="btn" style="left:413px;top:110px;width:16px;height:16px"></div>
<svg style="left:417px;top:115px" width="9" height="5"><path d="M0 4.5h9l-4.5-4.5z" fill="#000"/></svg>
<div class="btn" style="left:413px;top:286px;width:16px;height:92px"></div>
<div class="btn" style="left:413px;top:539px;width:16px;height:16px"></div>
<svg style="left:417px;top:545px" width="9" height="5"><path d="M0 0h9l-4.5 4.5z" fill="#000"/></svg>
<div class="a chk" style="left:50px;top:557px;width:360px;height:16px"></div>
<div class="btn" style="left:50px;top:557px;width:16px;height:16px"></div>
<svg style="left:55px;top:561px" width="5" height="9"><path d="M4.5 0v9l-4.5-4.5z" fill="#000"/></svg>
<div class="btn" style="left:191px;top:557px;width:76px;height:16px"></div>
<div class="btn" style="left:395px;top:557px;width:15px;height:16px"></div>
<svg style="left:399px;top:561px" width="5" height="9"><path d="M0 0v9l4.5-4.5z" fill="#000"/></svg>
<svg style="left:0;top:0" width="842" height="643" viewBox="0 0 842 643" class="a"><circle cx="418.00" cy="572.00" r=".6" fill="rgb(60,60,220)"/><circle cx="419.00" cy="571.28" r=".6" fill="rgb(77,57,202)"/><circle cx="420.00" cy="570.56" r=".6" fill="rgb(95,55,184)"/><circle cx="421.00" cy="569.83" r=".6" fill="rgb(113,53,166)"/><circle cx="422.00" cy="569.11" r=".6" fill="rgb(131,51,148)"/><circle cx="423.00" cy="568.39" r=".6" fill="rgb(148,48,131)"/><circle cx="424.00" cy="567.67" r=".6" fill="rgb(166,46,113)"/><circle cx="425.00" cy="566.94" r=".6" fill="rgb(184,44,95)"/><circle cx="426.00" cy="566.22" r=".6" fill="rgb(202,42,77)"/><circle cx="427.00" cy="565.50" r=".6" fill="rgb(220,40,60)"/><circle cx="417.67" cy="570.50" r=".6" fill="rgb(57,75,202)"/><circle cx="418.67" cy="569.78" r=".6" fill="rgb(75,73,184)"/><circle cx="419.67" cy="569.06" r=".6" fill="rgb(93,71,166)"/><circle cx="420.67" cy="568.33" r=".6" fill="rgb(111,68,148)"/><circle cx="421.67" cy="567.61" r=".6" fill="rgb(128,66,131)"/><circle cx="422.67" cy="566.89" r=".6" fill="rgb(146,64,113)"/><circle cx="423.67" cy="566.17" r=".6" fill="rgb(164,62,95)"/><circle cx="424.67" cy="565.44" r=".6" fill="rgb(182,59,77)"/><circle cx="425.67" cy="564.72" r=".6" fill="rgb(200,57,60)"/><circle cx="417.33" cy="569.00" r=".6" fill="rgb(55,91,184)"/><circle cx="418.33" cy="568.28" r=".6" fill="rgb(73,88,166)"/><circle cx="419.33" cy="567.56" r=".6" fill="rgb(91,86,148)"/><circle cx="420.33" cy="566.83" r=".6" fill="rgb(108,84,131)"/><circle cx="421.33" cy="566.11" r=".6" fill="rgb(126,82,113)"/><circle cx="422.33" cy="565.39" r=".6" fill="rgb(144,79,95)"/><circle cx="423.33" cy="564.67" r=".6" fill="rgb(162,77,77)"/><circle cx="424.33" cy="563.94" r=".6" fill="rgb(180,75,60)"/><circle cx="417.00" cy="567.50" r=".6" fill="rgb(53,106,166)"/><circle cx="418.00" cy="566.78" r=".6" fill="rgb(71,104,148)"/><circle cx="419.00" cy="566.06" r=".6" fill="rgb(88,102,131)"/><circle cx="420.00" cy="565.33" r=".6" fill="rgb(106,100,113)"/><circle cx="421.00" cy="564.61" r=".6" fill="rgb(124,97,95)"/><circle cx="422.00" cy="563.89" r=".6" fill="rgb(142,95,77)"/><circle cx="423.00" cy="563.17" r=".6" fill="rgb(160,93,60)"/><circle cx="416.67" cy="566.00" r=".6" fill="rgb(51,122,148)"/><circle cx="417.67" cy="565.28" r=".6" fill="rgb(68,120,131)"/><circle cx="418.67" cy="564.56" r=".6" fill="rgb(86,117,113)"/><circle cx="419.67" cy="563.83" r=".6" fill="rgb(104,115,95)"/><circle cx="420.67" cy="563.11" r=".6" fill="rgb(122,113,77)"/><circle cx="421.67" cy="562.39" r=".6" fill="rgb(140,111,60)"/><circle cx="416.33" cy="564.50" r=".6" fill="rgb(48,137,131)"/><circle cx="417.33" cy="563.78" r=".6" fill="rgb(66,135,113)"/><circle cx="418.33" cy="563.06" r=".6" fill="rgb(84,133,95)"/><circle cx="419.33" cy="562.33" r=".6" fill="rgb(102,131,77)"/><circle cx="420.33" cy="561.61" r=".6" fill="rgb(120,128,60)"/><circle cx="416.00" cy="563.00" r=".6" fill="rgb(46,153,113)"/><circle cx="417.00" cy="562.28" r=".6" fill="rgb(64,151,95)"/><circle cx="418.00" cy="561.56" r=".6" fill="rgb(82,148,77)"/><circle cx="419.00" cy="560.83" r=".6" fill="rgb(100,146,60)"/><circle cx="415.67" cy="561.50" r=".6" fill="rgb(44,168,95)"/><circle cx="416.67" cy="560.78" r=".6" fill="rgb(62,166,77)"/><circle cx="417.67" cy="560.06" r=".6" fill="rgb(80,164,60)"/><circle cx="415.33" cy="560.00" r=".6" fill="rgb(42,184,77)"/><circle cx="416.33" cy="559.28" r=".6" fill="rgb(60,182,60)"/><circle cx="415.00" cy="558.50" r=".6" fill="rgb(40,200,60)"/></svg>
<!-- dialog -->
<!-- dialog frame -->
<div class="a" style="left:438px;top:88px;width:350px;height:2px;background:#000"></div>
<div class="a" style="left:438px;top:88px;width:2px;height:487px;background:#000"></div>
<div class="vl" style="left:440px;top:90px;height:485px;background:#fff"></div>
<div class="hl" style="left:440px;top:90px;width:347px;background:#fff"></div>
<div class="hl" style="left:440px;top:114px;width:347px;background:#808080"></div>
<div class="hl" style="left:440px;top:115px;width:347px;background:#fff"></div>
<div class="vl" style="left:786px;top:88px;height:487px;background:#fff"></div>


<svg style="left:440px;top:95px" width="13" height="14" viewBox="0 0 13 14">
<rect x=".5" y=".5" width="12" height="13" fill="#f0f0f0" stroke="#333"/>
<rect x="1" y="1" width="11" height="2" fill="#5a7aa8"/>
<rect x="3.5" y="5.5" width="6" height="6" fill="#c8d4e0" stroke="#888" stroke-width=".7"/>
<rect x="5.5" y="7.5" width="5" height="4" fill="#f0c020" stroke="#665" stroke-width=".7"/>
</svg>
<div class="t" style="left:454px;top:96px;font-size:10.6px">Create Tiled Clones</div>
<!-- title buttons -->
<svg style="left:743px;top:95px" width="37" height="12" viewBox="743 95 37 12">
<rect x="743.5" y="95.5" width="11" height="11" rx="2" fill="#d4d0c8" stroke="#777"/>
<path d="M746.5 101l5-3.5v7z" fill="#666"/>
<rect x="767.5" y="95.5" width="11" height="11" rx="2" fill="#d4d0c8" stroke="#777"/>
<path d="M770 98l6 6M776 98l-6 6" stroke="#555" stroke-width="2"/>
</svg>

<!-- notebook panel -->
<div class="a" style="left:450px;top:148px;width:326px;height:283px;border-left:1px solid #fff;border-top:1px solid #fff;border-right:1px solid #000;border-bottom:1px solid #000;box-shadow:inset -1px -1px 0 #808080"></div>
<!-- tabs -->
<div class="a" style="left:451px;top:128px;width:58px;height:21px;border-left:1px solid #fff;border-top:1px solid #fff;border-right:1px solid #808080;border-radius:2px 2px 0 0"></div>
<div class="t" style="left:455px;top:133px;font-size:10.6px"><u>S</u>ymmetry</div>
<div class="a" style="left:541px;top:128px;width:36px;height:21px;border-left:1px solid #fff;border-top:1px solid #fff;border-radius:2px 2px 0 0;border-right:1px solid #000;box-shadow:inset -1px 0 0 #808080"></div>
<div class="t" style="left:545px;top:133px;font-size:10.6px">Sc<u>a</u>le</div>
<div class="a" style="left:577px;top:128px;width:50px;height:21px;border-left:1px solid #fff;border-top:1px solid #fff;border-radius:2px 2px 0 0;border-right:1px solid #000;box-shadow:inset -1px 0 0 #808080"></div>
<div class="t" style="left:580px;top:133px;font-size:10.6px"><u>R</u>otation</div>
<div class="a" style="left:627px;top:128px;width:76px;height:21px;border-left:1px solid #fff;border-top:1px solid #fff;border-radius:2px 2px 0 0;border-right:1px solid #000;box-shadow:inset -1px 0 0 #808080"></div>
<div class="t" style="left:631px;top:133px;font-size:10.6px"><u>B</u>lur &amp; opacity</div>
<div class="a" style="left:703px;top:128px;width:35px;height:21px;border-left:1px solid #fff;border-top:1px solid #fff;border-radius:2px 2px 0 0;border-right:1px solid #000;box-shadow:inset -1px 0 0 #808080"></div>
<div class="t" style="left:706px;top:133px;font-size:10.6px">Co<u>l</u>or</div>
<div class="a" style="left:738px;top:128px;width:38px;height:21px;border-left:1px solid #fff;border-top:1px solid #fff;border-radius:2px 2px 0 0;border-right:1px solid #000;box-shadow:inset -1px 0 0 #808080"></div>
<div class="t" style="left:741px;top:133px;font-size:10.6px"><u>T</u>race</div>
<!-- active tab -->
<div class="a" style="left:508px;top:125px;width:34px;height:25px;background:#d4d0c8;border-left:1px solid #fff;border-top:1px solid #fff;border-right:1px solid #000;box-shadow:inset -1px 0 0 #808080;border-radius:2px 2px 0 0"></div>
<div class="t" style="left:513px;top:131px;font-size:10.6px">S<u>h</u>ift</div>

<!-- header row -->
<svg style="left:534px;top:164px" width="13" height="13" viewBox="0 0 13 13">
<rect x=".5" y=".5" width="12" height="3" rx="1" fill="#c8d8e8" stroke="#555"/>
<rect x=".5" y="4.5" width="12" height="3" rx="1" fill="#c8d8e8" stroke="#555"/>
<rect x=".5" y="8.5" width="12" height="3" rx="1" fill="#c8d8e8" stroke="#555"/>
</svg>
<div class="t" style="left:552px;top:165px;font-size:9.2px">Per row:</div>
<svg style="left:606px;top:164px" width="13" height="13" viewBox="0 0 13 13">
<rect x=".5" y=".5" width="3" height="12" rx="1" fill="#c8d8e8" stroke="#555"/>
<rect x="4.5" y=".5" width="3" height="12" rx="1" fill="#c8d8e8" stroke="#555"/>
<rect x="8.5" y=".5" width="3" height="12" rx="1" fill="#c8d8e8" stroke="#555"/>
</svg>
<div class="t" style="left:623px;top:165px;font-size:9.2px">Per column:</div>
<div class="t" style="left:682px;top:165px;font-size:9.2px">Randomize:</div>

<!-- rows -->
<div class="t" style="left:475px;top:189px;font-weight:bold;font-size:11.3px">Shift X:</div>
<div class="t" style="left:475px;top:216px;font-weight:bold;font-size:11.3px">Shift Y:</div>
<div class="t" style="left:468px;top:243px;font-weight:bold;font-size:11.3px">Exponent:</div>

<div class="inp" style="left:533px;top:184px;width:50px;height:21px"><span>0.000</span></div>
<div class="spin" style="left:571px;top:186px;height:17px"><i class="u"></i><i class="d"></i></div>
<div class="t" style="left:585px;top:184px">%</div>
<div class="inp" style="left:604px;top:184px;width:50px;height:21px;overflow:hidden"><span>-100.0</span></div>
<div class="spin" style="left:642px;top:186px;height:17px"><i class="u"></i><i class="d"></i></div>
<div class="t" style="left:655px;top:184px">%</div>
<div class="inp" style="left:683px;top:184px;width:50px;height:21px"><span>0.000</span></div>
<div class="spin dd" style="left:721px;top:186px;height:17px"><i class="u"></i><i class="d dd"></i></div>
<div class="t" style="left:735px;top:184px">%</div>

<div class="inp" style="left:533px;top:211px;width:50px;height:21px"><span>0.000</span></div>
<div class="spin" style="left:571px;top:213px;height:17px"><i class="u"></i><i class="d"></i></div>
<div class="t" style="left:585px;top:211px">%</div>
<div class="inp" style="left:604px;top:211px;width:50px;height:21px"><span>0.000</span></div>
<div class="spin" style="left:642px;top:213px;height:17px"><i class="u"></i><i class="d"></i></div>
<div class="t" style="left:655px;top:211px">%</div>
<div class="inp" style="left:683px;top:211px;width:50px;height:21px"><span>0.000</span></div>
<div class="spin dd" style="left:721px;top:213px;height:17px"><i class="u"></i><i class="d dd"></i></div>
<div class="t" style="left:735px;top:211px">%</div>

<div class="inp" style="left:533px;top:238px;width:50px;height:21px"><span>1.000</span></div>
<div class="spin" style="left:571px;top:240px;height:17px"><i class="u"></i><i class="d"></i></div>
<div class="inp" style="left:604px;top:238px;width:50px;height:21px"><span>1.000</span></div>
<div class="spin" style="left:642px;top:240px;height:17px"><i class="u"></i><i class="d"></i></div>

<div class="t" style="left:476px;top:271px;font-size:9.2px">Alternate:</div>
<div class="t" style="left:474px;top:300px;font-size:9.2px">Cumulate:</div>
<div class="t" style="left:471px;top:329px;font-size:9.2px">Exclude tile:</div>
<div class="cb" style="left:537px;top:270px"></div>
<div class="cb" style="left:608px;top:270px"></div>
<div class="cb" style="left:537px;top:299px"></div>
<div class="cb" style="left:608px;top:299px"></div>
<div class="cb" style="left:537px;top:328px"></div>
<div class="cb" style="left:608px;top:328px"></div>

<!-- rows/cols -->
<svg style="left:461px;top:448px" width="14" height="40" viewBox="0 0 14 40">
<circle cx="7" cy="7" r="5.5" fill="#fff" stroke="#808080"/>
<path d="M2.5 10.5a5.5 5.5 0 0 1 8-7.5" fill="none" stroke="#404040"/>
<circle cx="7" cy="7" r="2" fill="#000"/>
<circle cx="7" cy="34" r="5.5" fill="#fff" stroke="#808080"/>
<path d="M2.5 37.5a5.5 5.5 0 0 1 8-7.5" fill="none" stroke="#404040"/>
</svg>
<div class="t" style="left:481px;top:449px;font-size:10.8px">Rows, columns:</div>
<div class="t" style="left:481px;top:476px;font-size:10.8px">Width, height:</div>
<div class="inp" style="left:569px;top:445px;width:62px;height:19px"><span style="top:2px">1</span></div>
<div class="spin dd" style="left:619px;top:447px;height:15px"><i class="u"></i><i class="d"></i></div>
<div class="t" style="left:636px;top:448px;color:#333">×</div>
<div class="inp" style="left:648px;top:445px;width:61px;height:19px"><span style="top:2px">10</span></div>
<div class="spin dd" style="left:697px;top:447px;height:15px"><i class="u"></i><i class="d"></i></div>

<div class="inp" style="left:569px;top:472px;width:62px;height:19px;background:#d4d0c8;overflow:hidden"><span style="top:2px;color:#a0a0a0">100.0000</span></div>
<div class="spin dis" style="left:619px;top:474px;height:15px"><i class="u"></i><i class="d"></i></div>
<div class="t" style="left:636px;top:475px;color:#a0a0a0">×</div>
<div class="inp" style="left:648px;top:472px;width:61px;height:19px;background:#d4d0c8;overflow:hidden"><span style="top:2px;color:#a0a0a0">100.0000</span></div>
<div class="spin dis" style="left:697px;top:474px;height:15px"><i class="u"></i><i class="d"></i></div>
<div class="inp" style="left:714px;top:472px;width:53px;height:19px;background:#d4d0c8"><span style="top:2px;color:#a0a0a0">px</span></div>
<div class="btn" style="left:745px;top:474px;width:20px;height:15px"></div>
<svg style="left:751px;top:479px" width="9" height="6"><path d="M0.5 0.5h8l-4 4.5z" fill="#808080"/></svg>

<div class="cb" style="left:452px;top:506px"></div>
<div class="t" style="left:471px;top:507px;font-size:10.8px">Use saved size and position of the tile</div>

<div class="btn" style="left:450px;top:528px;width:46px;height:25px"></div>
<div class="t" style="left:458px;top:535px;font-size:10.8px">R<u>e</u>set</div>
<div class="btn" style="left:601px;top:528px;width:57px;height:25px"></div>
<div class="t" style="left:609px;top:535px;font-size:10.8px">Re<u>m</u>ove</div>
<div class="btn" style="left:658px;top:528px;width:58px;height:25px"></div>
<div class="t" style="left:666px;top:535px;font-size:10.8px"><u>U</u>nclump</div>
<div class="btn" style="left:720px;top:528px;width:56px;height:25px"></div>
<div class="t" style="left:728px;top:535px;font-size:11.6px;font-weight:bold"><u>C</u>reate</div>
<div class="t" style="left:450px;top:557px;font-size:9.6px">Object has <b>10</b> tiled clones.</div>

<!-- dialog scrollbar -->
<div class="a chk" style="left:790px;top:104px;width:16px;height:470px"></div>
<div class="btn" style="left:790px;top:89px;width:16px;height:15px"></div>
<svg style="left:794px;top:94px" width="9" height="5"><path d="M0 4.5h8l-4-4.5z" fill="#808080"/></svg>
<div class="btn" style="left:790px;top:104px;width:16px;height:420px"></div>
<div class="btn" style="left:790px;top:559px;width:16px;height:15px"></div>
<svg style="left:794px;top:564px" width="9" height="5"><path d="M0 0h9l-4.5 4.5z" fill="#000"/></svg>

<!-- cmds -->
<div class="vl" style="left:805px;top:88px;height:487px;background:#000"></div>

<div class="vl" style="left:807px;top:88px;height:487px;background:#fff"></div><div class="hl" style="left:807px;top:88px;width:31px;background:#fff"></div>
<div class="vl" style="left:838px;top:88px;height:487px;background:#808080"></div><div class="hl" style="left:807px;top:574px;width:32px;background:#808080"></div>
<div class="press chk" style="left:809px;top:90px;width:28px;height:28px"></div>
<div class="press chk" style="left:809px;top:130px;width:28px;height:28px"></div>
<div class="press chk" style="left:809px;top:242px;width:28px;height:28px"></div>
<div class="press chk" style="left:809px;top:282px;width:28px;height:28px"></div>
<div class="press chk" style="left:809px;top:462px;width:28px;height:28px"></div>
<div class="press chk" style="left:809px;top:518px;width:28px;height:28px"></div>
<svg style="left:808px;top:88px" width="30" height="487" viewBox="808 88 30 487">
<g transform="translate(819 100)"><path d="M1.5 1.5l6 6" stroke="#000" stroke-width="1.4"/><path d="M8.8 8.8l-4.2-1.2l3-3z" fill="#000"/><path d="M0 -2.7L2.7 0L0 2.7L-2.7 0Z" fill="#a8a8ff" stroke="#2020ff" stroke-width="1.2"/><path d="M10 7.3L12.7 10L10 12.7L7.3 10Z" fill="#b8b8e8" stroke="#208a20" stroke-width="1.2"/></g>
<rect x="815" y="123" width="17" height="1" fill="#808080"/><rect x="815" y="124" width="17" height="1" fill="#fff"/>
<g transform="translate(819 140)"><path d="M1.5 1.5l6 6" stroke="#000" stroke-width="1.4"/><path d="M8.8 8.8l-4.2-1.2l3-3z" fill="#000"/><path d="M0 -2.7L2.7 0L0 2.7L-2.7 0Z" fill="#a8a8ff" stroke="#2020ff" stroke-width="1.2"/><path d="M10 7.3L12.7 10L10 12.7L7.3 10Z" fill="#b8b8e8" stroke="#208a20" stroke-width="1.2"/></g>
<!-- bbox corner green dotted -->
<path d="M828.5 164v13h-13" fill="none" stroke="#2a9a2a" stroke-width="1.5" stroke-dasharray="1.5 1"/>
<!-- dotted corner with node -->
<path d="M828.5 192v12.5h-13" fill="none" stroke="#333" stroke-width="1.2" stroke-dasharray="1.5 1"/>
<circle cx="828.5" cy="204.5" r="1.7" fill="#7070c0" stroke="#2a8a2a" stroke-width="1.3"/>
<path d="M828.5 226v6.5h-13" fill="none" stroke="#333" stroke-width="1.2" stroke-dasharray="1.5 1"/>
<circle cx="828.5" cy="223.5" r="1.7" fill="#7070c0" stroke="#2a8a2a" stroke-width="1.3"/>
<!-- button 6 -->
<circle cx="819.5" cy="252.5" r="1.8" fill="none" stroke="#2a8a2a" stroke-width="1.2"/>
<path d="M829.5 249v13.5h-13" fill="none" stroke="#222" stroke-width="1.2" stroke-dasharray="1.5 1"/>
<rect x="815" y="275" width="17" height="1" fill="#808080"/><rect x="815" y="276" width="17" height="1" fill="#fff"/>
<g transform="translate(819 291)"><path d="M1.5 1.5l6 6" stroke="#000" stroke-width="1.4"/><path d="M8.8 8.8l-4.2-1.2l3-3z" fill="#000"/><path d="M0 -2.7L2.7 0L0 2.7L-2.7 0Z" fill="#a8a8ff" stroke="#2020ff" stroke-width="1.2"/><path d="M10 7.3L12.7 10L10 12.7L7.3 10Z" fill="#b8b8e8" stroke="#208a20" stroke-width="1.2"/></g>
<!-- green curve -->
<path d="M816 318q8 0 10 6q1 5-4 7q5 0 8-4" fill="none" stroke="#208a20" stroke-width="1.6"/>
<!-- cross with node -->
<path d="M815 358l16-12M816 351l15 5" stroke="#444" stroke-width="1"/>
<circle cx="823" cy="352" r="2" fill="#8080c0" stroke="#208020" stroke-width="1.2"/>
<!-- curve with node -->
<path d="M815 373q8 0 10 5q2 6-3 8" fill="none" stroke="#444" stroke-width="1"/>
<rect x="820" y="382" width="4" height="4" fill="#8080c0" stroke="#208020" stroke-width="1.2" transform="rotate(45 822 384)"/>
<!-- curve node end -->
<path d="M818 401q3 0 4 3q1 3 0 5q3 4 8 1" fill="none" stroke="#444" stroke-width="1"/>
<rect x="821" y="400" width="4" height="4" fill="#8080c0" stroke="#208020" stroke-width="1.2"/>
<!-- red hashes -->
<path d="M815 444l16-14" stroke="#208020" stroke-width="1"/>
<path d="M816 440l3 5M818 438l3 5M827 432l3 5M829 430l3 5" stroke="#d02020" stroke-width="1.3"/>
<circle cx="823" cy="437" r="2" fill="#8080c0" stroke="#208020" stroke-width="1.2"/>
<rect x="815" y="455" width="17" height="1" fill="#808080"/><rect x="815" y="456" width="17" height="1" fill="#fff"/>
<g transform="translate(819 470)"><path d="M1.5 1.5l6 6" stroke="#000" stroke-width="1.4"/><path d="M8.8 8.8l-4.2-1.2l3-3z" fill="#000"/><path d="M0 -2.7L2.7 0L0 2.7L-2.7 0Z" fill="#a8a8ff" stroke="#2020ff" stroke-width="1.2"/><path d="M10 7.3L12.7 10L10 12.7L7.3 10Z" fill="#b8b8e8" stroke="#208a20" stroke-width="1.2"/></g>
<!-- circle corner -->
<circle cx="820.5" cy="501.5" r="1.8" fill="none" stroke="#2a8a2a" stroke-width="1.2"/>
<path d="M829.5 497v11.5h-13" fill="none" stroke="#444" stroke-width="1"/>
<!-- plus dotted -->
<path d="M816 528.5h6M819 525.5v6" stroke="#000" stroke-width="1.2"/>
<path d="M829.5 523v14.5h-13" fill="none" stroke="#222" stroke-width="1.2" stroke-dasharray="1.5 1"/>
<path d="M820 555v7.5l4.5-3.75z" fill="#000"/>
</svg>

<!-- palette -->
<div class="a" style="left:2px;top:576px;width:820px;height:18px;background:#000"></div><div class="vl" style="left:822px;top:576px;height:19px;background:#fff"></div>
<svg style="left:0;top:575px" width="842" height="20" viewBox="0 575 842 20">
<rect x="3" y="577" width="17" height="17" fill="#fff"/>
<path d="M3.5 577.5l16 16M19.5 577.5l-16 16" stroke="#800000" stroke-width="1.6"/>
<rect x="20" y="577" width="17" height="17" fill="#000000"/>
<rect x="37" y="577" width="17" height="17" fill="#1a1a1a"/>
<rect x="54" y="577" width="17" height="17" fill="#333333"/>
<rect x="71" y="577" width="17" height="17" fill="#4d4d4d"/>
<rect x="88" y="577" width="17" height="17" fill="#666666"/>
<rect x="105" y="577" width="17" height="17" fill="#808080"/>
<rect x="122" y="577" width="17" height="17" fill="#999999"/>
<rect x="139" y="577" width="17" height="17" fill="#b3b3b3"/>
<rect x="156" y="577" width="17" height="17" fill="#cccccc"/>
<rect x="173" y="577" width="17" height="17" fill="#e6e6e6"/>
<rect x="190" y="577" width="17" height="17" fill="#ececec"/>
<rect x="207" y="577" width="17" height="17" fill="#f2f2f2"/>
<rect x="224" y="577" width="17" height="17" fill="#f8f8f8"/>
<rect x="241" y="577" width="17" height="17" fill="#ffffff"/>
<rect x="258" y="577" width="17" height="17" fill="#800000"/>
<rect x="275" y="577" width="17" height="17" fill="#ff0000"/>
<rect x="292" y="577" width="17" height="17" fill="#808000"/>
<rect x="309" y="577" width="17" height="17" fill="#ffff00"/>
<rect x="326" y="577" width="17" height="17" fill="#008000"/>
<rect x="343" y="577" width="17" height="17" fill="#00ff00"/>
<rect x="360" y="577" width="17" height="17" fill="#008080"/>
<rect x="377" y="577" width="17" height="17" fill="#00ffff"/>
<rect x="394" y="577" width="17" height="17" fill="#000080"/>
<rect x="411" y="577" width="17" height="17" fill="#0000ff"/>
<rect x="428" y="577" width="17" height="17" fill="#800080"/>
<rect x="445" y="577" width="17" height="17" fill="#ff00ff"/>
<rect x="462" y="577" width="17" height="17" fill="#2b0000"/>
<rect x="479" y="577" width="17" height="17" fill="#550000"/>
<rect x="496" y="577" width="17" height="17" fill="#800000"/>
<rect x="513" y="577" width="17" height="17" fill="#aa0000"/>
<rect x="530" y="577" width="17" height="17" fill="#d40000"/>
<rect x="547" y="577" width="17" height="17" fill="#ff0000"/>
<rect x="564" y="577" width="17" height="17" fill="#ff2a2a"/>
<rect x="581" y="577" width="17" height="17" fill="#ff5555"/>
<rect x="598" y="577" width="17" height="17" fill="#ff8080"/>
<rect x="615" y="577" width="17" height="17" fill="#ffaaaa"/>
<rect x="632" y="577" width="17" height="17" fill="#ffd5d5"/>
<rect x="649" y="577" width="17" height="17" fill="#280b0b"/>
<rect x="666" y="577" width="17" height="17" fill="#501616"/>
<rect x="683" y="577" width="17" height="17" fill="#782121"/>
<rect x="700" y="577" width="17" height="17" fill="#a02c2c"/>
<rect x="717" y="577" width="17" height="17" fill="#c83737"/>
<rect x="734" y="577" width="17" height="17" fill="#d35f5f"/>
<rect x="751" y="577" width="17" height="17" fill="#de8787"/>
<rect x="768" y="577" width="17" height="17" fill="#e9afaf"/>
<rect x="785" y="577" width="17" height="17" fill="#f4d7d7"/>
<rect x="802" y="577" width="17" height="17" fill="#241c1c"/>
<rect x="819" y="577" width="3" height="17" fill="#483737"/>
<path d="M833 577.5v8l-4.5-4z" fill="#000"/>
</svg>
<div class="hl" style="left:0;top:595px;width:823px;background:#fff"></div>
<div class="a chk" style="left:2px;top:597px;width:822px;height:16px"></div>
<div class="btn" style="left:2px;top:597px;width:15px;height:16px"></div>
<svg style="left:7px;top:601px" width="5" height="9"><path d="M4.5 0v8l-4.5-4z" fill="#808080"/></svg>
<div class="btn" style="left:17px;top:597px;width:88px;height:16px"></div>
<div class="btn" style="left:809px;top:597px;width:16px;height:16px"></div>
<svg style="left:815px;top:601px" width="5" height="9"><path d="M0 0v8l4.5-4z" fill="#000"/></svg>
<!-- status -->
<div class="t" style="left:2px;top:614px;font-size:10.4px">Fill:</div>
<div class="t" style="left:70px;top:614px;font-size:10.4px;font-style:italic">None</div>
<div class="t" style="left:2px;top:628px;font-size:10.8px">Stroke:</div>
<div class="a" style="left:42px;top:627px;width:33px;height:14px;background:repeating-conic-gradient(#5e5ebc 0 25%,#7c7ccc 0 50%) 0 0/12.4px 14px"></div>
<div class="a" style="left:75px;top:627px;width:33px;height:14px;background:#2d2dc8"></div>
<div class="t" style="left:111px;top:628px;font-size:11px">27</div>
<div class="t" style="left:126px;top:621px;font-size:11px">O:</div>
<div class="inp" style="left:141px;top:616px;width:48px;height:21px"><span>100</span></div>
<div class="spin du" style="left:177px;top:618px;height:17px"><i class="u"></i><i class="d"></i></div>
<div class="sep" style="left:191px;top:614px;height:28px"></div>
<svg style="left:196px;top:619px" width="40" height="16" viewBox="0 0 40 16">
<path d="M1.5 7.5q6.5-6 13 0q-6.5 6-13 0z" fill="#fff" stroke="#000" stroke-width="1.4"/>
<circle cx="8" cy="7.5" r="2.8" fill="#000"/><circle cx="7.2" cy="6.6" r=".8" fill="#fff"/>
<path d="M3.5 4l-1.5-2M8 3v-2.5M12.5 4l1.5-2" stroke="#000" stroke-width="1.1"/>
<path d="M29 6.5v-2.5a3 3 0 0 1 6 -.5v1.5" fill="none" stroke="#222" stroke-width="1.4" transform="rotate(10 31 6)"/>
<path d="M24.5 8.5l8-1.5l1.2 6.5l-8 1.5z" fill="#f4d040" stroke="#3a3010" stroke-width=".9"/>
<rect x="28.5" y="10" width="1.5" height="2.5" fill="#3a3010"/>
</svg>
<div class="inp" style="left:238px;top:614px;width:75px;height:25px;background:#fff"></div>
<div class="t" style="left:242px;top:620px;font-size:11.3px;font-weight:bold">·Layer 1</div>
<div class="btn" style="left:295px;top:616px;width:16px;height:21px"></div>
<svg style="left:299px;top:624px" width="9" height="6"><path d="M0.5 0.5h8l-4 4.5z" fill="#000"/></svg>
<div class="t" style="left:319px;top:620px;font-size:10.8px"><b style="font-size:11.7px">Rectangle</b> &nbsp;in layer <b style="font-size:11.7px">Layer 1</b>.</div>
<div class="t" style="left:468px;top:620px;font-size:10.8px">Click selection to toggle scale/rotation hand</div>
<div class="a" style="left:677px;top:613px;width:1px;height:30px;background:#808080"></div>
<div class="a" style="left:678px;top:613px;width:1px;height:30px;background:#fff"></div>
<div class="t" style="left:681px;top:614px;font-size:11.2px;font-family:'Liberation Mono',monospace">X: 676.83</div>
<div class="t" style="left:681px;top:627px;font-size:11.2px;font-family:'Liberation Mono',monospace">Y: 228.95</div>
<div class="t" style="left:750px;top:621px;font-size:11px">Z:</div>
<div class="inp" style="left:763px;top:616px;width:57px;height:22px"><span style="left:9px;top:3px;font-size:12px">60%</span></div>
<div class="spin" style="left:808px;top:618px;height:18px"><i class="u"></i><i class="d"></i></div>
<svg style="left:824px;top:627px" width="16" height="14" viewBox="0 0 16 14">
<path d="M15 2l-12 12M15 6l-8 8M15 10l-4 4" stroke="#fff" stroke-width="1"/>
<path d="M15.5 3l-12 12M15.5 7l-8 8M15.5 11l-4 4" stroke="#808080" stroke-width="1"/>
</svg>

</body></html>
